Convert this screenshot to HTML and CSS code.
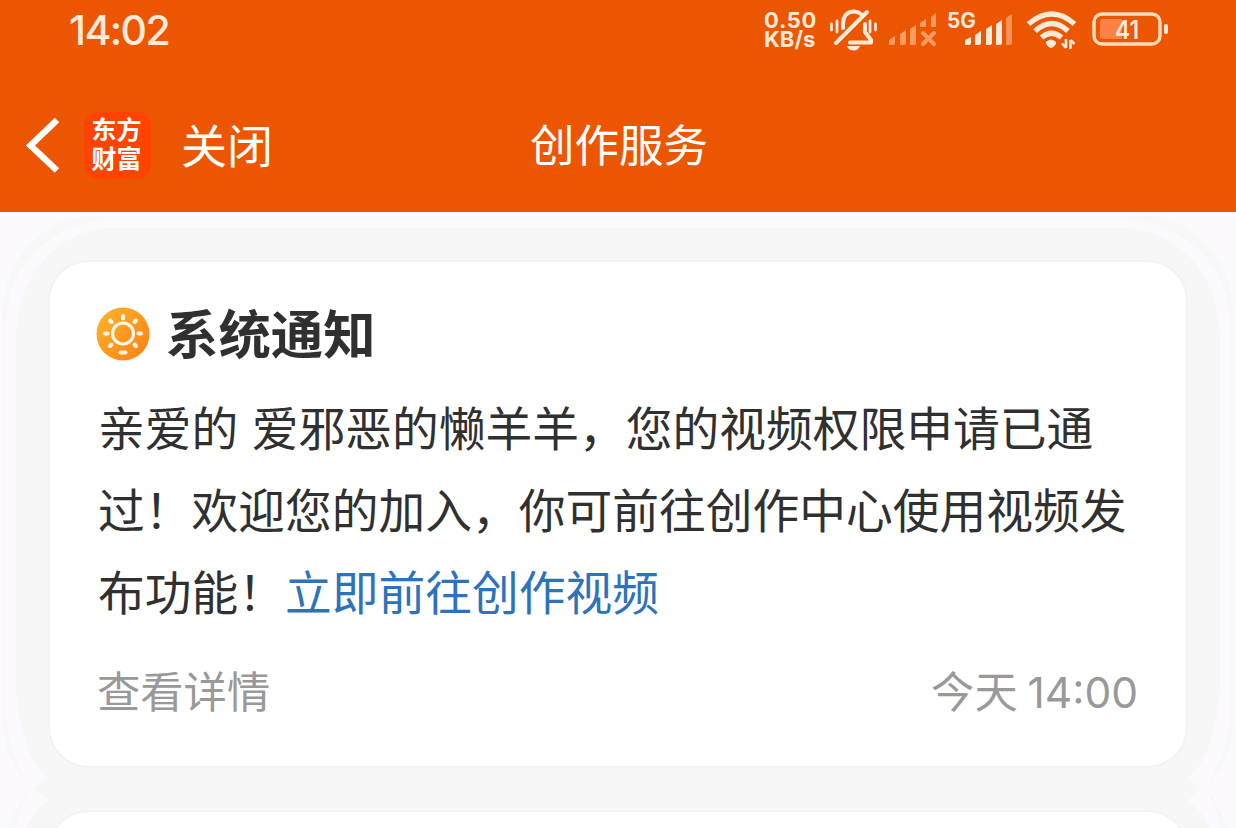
FILE: index.html
```html
<!DOCTYPE html>
<html lang="zh-CN">
<head>
<meta charset="utf-8">
<title>创作服务</title>
<link rel="stylesheet" href="styles.css">
</head>
<body>
<header class="top">
  <div class="status">
    <span class="clock">14:02</span>
    <div class="rate"><span>0.50</span><span>KB/s</span></div>
    <svg class="indicators" width="350" height="60" viewBox="820 0 350 60">
      <g fill="none" stroke="#ffe9d8" stroke-width="4" stroke-linecap="round" stroke-linejoin="round">
        <path d="M843 28V24C843 15 848 11.500 854 11.500C857 11.500 859 12.500 861 14M865 24V32L871 40V42.500H850"/>
        <path d="M867 12L836 43"/>
        <path d="M831.500 24V30M837 21V32M870 21V32M875.500 24V30" stroke-width="2.800"/>
      </g>
      <path d="M847 46H860C858 52 849 52 847 46Z" fill="#ffe9d8"/>
      <g fill="#ff9a62">
        <path d="M889 45V40L895 36V43Q895 45 893 45ZM900 45V34L906 30V43Q906 45 904 45ZM910 45V29L916 25V43Q916 45 914 45ZM920 27V23L926 19V27ZM931 27V17L936 13V27Z"/>
        <path d="M923 33L934 44M934 33L923 44" fill="none" stroke="#ff9a62" stroke-width="4" stroke-linecap="round"/>
      </g>
      <text class="network" x="947" y="28" textLength="29" lengthAdjust="spacingAndGlyphs">5G</text>
      <path fill="#ffe9d8" d="M965 45V40L971 37V43Q971 45 969 45ZM975 45V35L981 31V43Q981 45 979 45ZM986 45V29L992 25V43Q992 45 990 45ZM996 45V24L1002 20V43Q1002 45 1000 45Z"/>
      <path fill="#ff9158" d="M1006 45V18L1012 14V43Q1012 45 1010 45Z"/>
      <g fill="none" stroke="#ffe9d8" stroke-width="5.400">
        <path d="M1028.500 24Q1052 4 1074.500 24"/>
        <path d="M1035 31Q1052 16 1068 31"/>
        <path d="M1041.500 37.500Q1051.500 29 1061.500 37.500"/>
      </g>
      <path fill="#ffe9d8" d="M1046 42Q1051 37 1056 42C1057 44 1053 48 1051 48S1045 44 1046 42Z"/>
      <path d="M1066 39V48M1066 48L1062 43.500M1070.500 49V40M1070.500 40L1074.500 44" fill="none" stroke="#ffe9d8" stroke-width="2.600"/>
      <rect x="1094" y="14" width="66" height="30" rx="8" fill="none" stroke="#ffdcc0" stroke-width="3.400"/>
      <path fill="#fa8247" d="M1103 19H1122V39H1103Q1100 39 1100 36V22Q1100 19 1103 19Z"/>
      <text class="battery" x="1115" y="38.500" textLength="24" lengthAdjust="spacingAndGlyphs">41</text>
      <rect x="1164" y="24" width="4" height="10" rx="2" fill="#ffe9d8"/>
    </svg>
  </div>
  <nav class="nav">
    <svg class="back" width="36" height="60" viewBox="24 115 36 60"><path d="M57 120L30.500 145.500L57 170.500" fill="none" stroke="#fff" stroke-width="6.400"/></svg>
    <div class="brand"><span>东方</span><span>财富</span></div>
    <span class="close">关闭</span>
    <h1 class="title">创作服务</h1>
  </nav>
</header>
<main class="feed">
  <svg class="halo" width="1236" height="616" viewBox="0 212 1236 616">
    <defs>
      <g id="side">
        <path fill="#f7f8f7" d="M618 216H85C40 221 3 262 3 310V725C4 750 15 772 30 788C22 799 14 812 8 828H618Z"/>
        <path fill="#fdfaff" d="M618 219H110C50 224 7 265 6 325V715C8 742 17 768 30 788C25 798 18 813 16 828H618Z"/>
        <path fill="#f7f7f7" d="M618 228H107C55 233 17 275 16 338V690C19 732 30 764 48 778L34 789L48 800C38 808 31 817 27 828H618Z"/>
      </g>
    </defs>
    <use href="#side"/>
    <use href="#side" transform="translate(1236 0) scale(-1 1)"/>
  </svg>
  <article class="card">
    <div class="heading">
      <svg width="54" height="54" viewBox="0 0 54 54">
        <defs><linearGradient id="sun" x1="0" y1="0" x2="1" y2="1"><stop offset="0" stop-color="#ffb52b"/><stop offset="1" stop-color="#ff7e14"/></linearGradient></defs>
        <circle cx="27" cy="27" r="26.500" fill="url(#sun)"/>
        <g fill="none" stroke="#fff7e6" stroke-linecap="round">
          <circle cx="27" cy="26.500" r="10.500" stroke-width="3.200"/>
          <path stroke-width="4" d="M27 9V11.500M9 26.500H11.500M42.500 26.500H45M14 13.500L15.500 15M40 13.500L38.500 15M14 39L15.500 37.500M40 39L38.500 37.500M24.500 45.500H29.500"/>
        </g>
      </svg>
      <h2>系统通知</h2>
    </div>
    <p class="message">亲爱的 爱邪恶的懒羊羊，您的视频权限申请已通<br>过！欢迎您的加入，你可前往创作中心使用视频发<br>布功能！<a class="link">立即前往创作视频</a></p>
    <footer class="meta"><span>查看详情</span><span class="when">今天 <b>14:00</b></span></footer>
  </article>
  <article class="card"></article>
</main>
</body>
</html>
```
FILE: styles.css
```css
* { box-sizing: border-box; }
body {
  margin: 0;
  width: 1236px;
  height: 828px;
  overflow: hidden;
  display: flex;
  flex-direction: column;
  background: #fdfaff;
  font-family: "Noto Sans CJK SC", sans-serif;
  color: #303030;
}
h1, h2, p { margin: 0; font-weight: 400; }
.top { height: 212px; flex: none; background: #ed5600; color: #fff; }
.status { height: 74px; display: flex; align-items: flex-start; color: #ffe9d8; }
.clock {
  width: 696px;
  padding-left: 69px;
  font: 500 41px/60px Inter, sans-serif;
  letter-spacing: -1.6px;
}
.rate {
  width: 124px;
  padding: 11px 0 0 68px;
  display: flex;
  flex-direction: column;
  font: 700 22px/18.5px Inter, sans-serif;
}
.rate span:first-child { letter-spacing: 0.7px; }
.network { font: 700 21px Inter, sans-serif; fill: #ffe9d8; }
.battery { font: 600 25px Inter, sans-serif; fill: #ffe9d8; }
.nav { height: 138px; display: grid; grid-template-columns: 60px 24px 67px 30px 349px 1fr; align-items: center; }
.back { margin: 4px 0 0 24px; }
.brand {
  grid-column: 3;
  width: 67px;
  height: 67px;
  margin-top: 4px;
  padding: 0 2px 5px 0;
  border-radius: 14px;
  background: #ff4300;
  display: flex;
  flex-direction: column;
  align-items: center;
  justify-content: center;
  font: 700 25px/28.5px "Noto Sans CJK SC", sans-serif;
}
.close { grid-column: 5; font-size: 46px; line-height: 60px; }
.title { font-size: 44.5px; line-height: 60px; }
.feed {
  position: relative;
  flex: 1;
  min-height: 0;
  padding: 50px 50px 0;
  display: flex;
  flex-direction: column;
  gap: 46px;
  overflow: hidden;
}
.halo { position: absolute; left: 0; top: 0; }
.card {
  position: relative;
  flex: none;
  height: 504px;
  padding: 40px 48px 0;
  border-radius: 38px;
  background: #fff;
  box-shadow: 0 0 3px #e9e4e9;
}
.heading { display: flex; align-items: center; gap: 16px; height: 64px; margin-left: -2px; }
.heading h2 { font-size: 52.4px; line-height: 60px; padding-bottom: 7px; font-weight: 700; }
.message { margin-top: 19px; font-size: 46.75px; line-height: 82px; white-space: nowrap; word-spacing: 3px; }
.link { color: #2e72bb; }
.meta {
  margin-top: 28px;
  margin-left: -1px;
  display: flex;
  justify-content: space-between;
  font-size: 43.3px;
  line-height: 60px;
  color: #999;
}
.meta b { font: 400 42.5px/60px Inter, sans-serif; }
```
